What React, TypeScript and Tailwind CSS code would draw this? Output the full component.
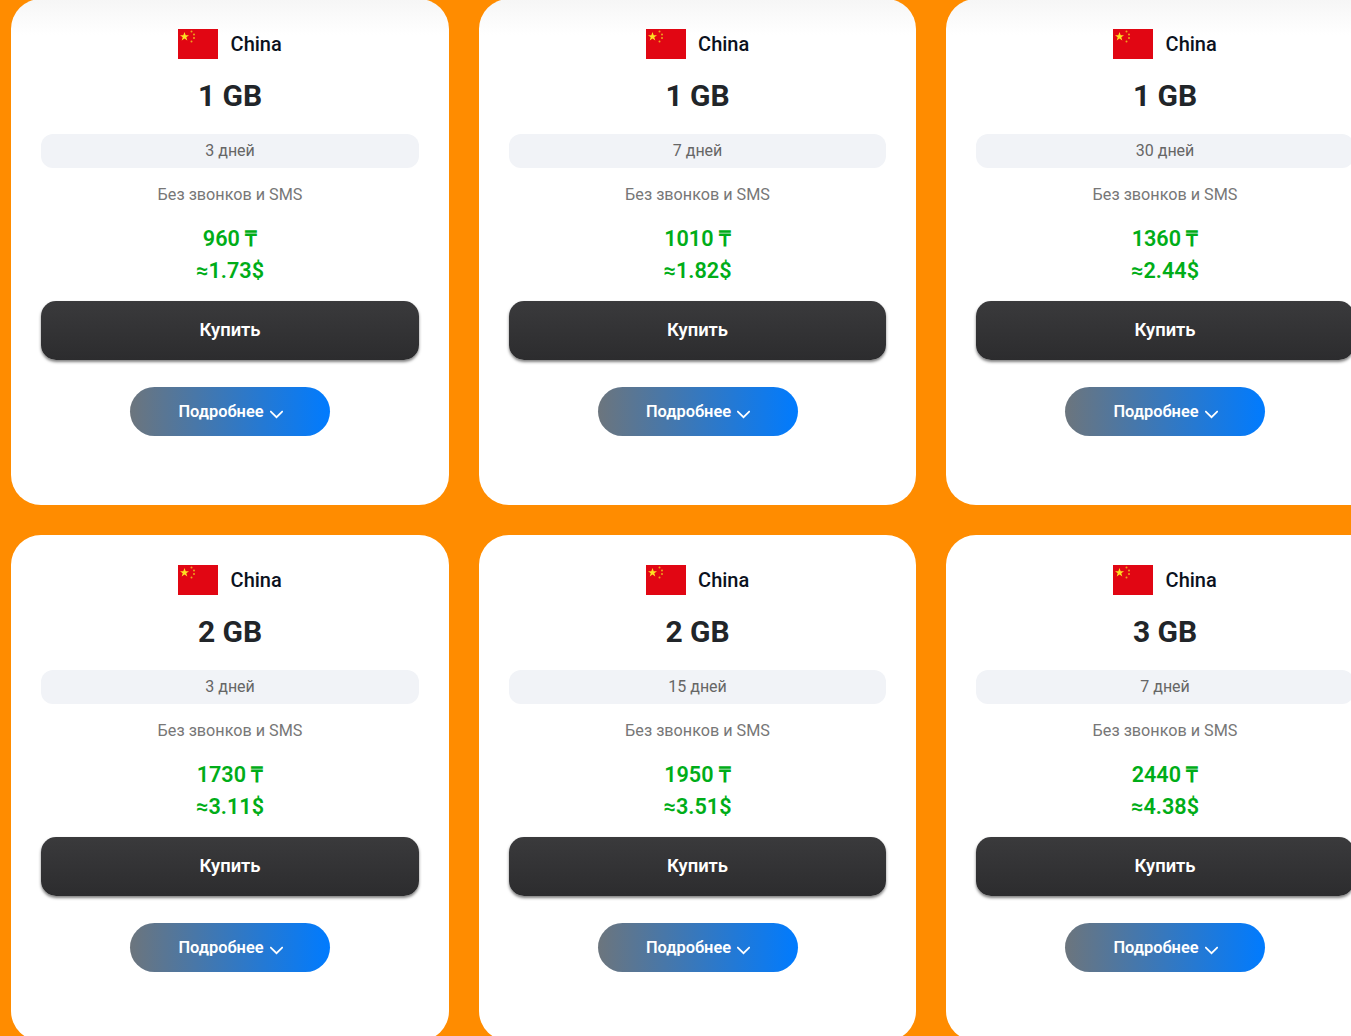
const plans = [
  { gb: "1 GB", days: "3 дней", price: "960", usd: "1.73" },
  { gb: "1 GB", days: "7 дней", price: "1010", usd: "1.82" },
  { gb: "1 GB", days: "30 дней", price: "1360", usd: "2.44" },
  { gb: "2 GB", days: "3 дней", price: "1730", usd: "3.11" },
  { gb: "2 GB", days: "15 дней", price: "1950", usd: "3.51" },
  { gb: "3 GB", days: "7 дней", price: "2440", usd: "4.38" },
];

function ChinaFlag() {
  return (
    <svg width="40" height="30" viewBox="0 0 40 30" className="shrink-0">
      <rect width="40" height="30" fill="#e10613" />
      <polygon
        points="6.5,3 7.7,6.2 11,6.2 8.3,8.3 9.3,11.5 6.5,9.6 3.7,11.5 4.7,8.3 2,6.2 5.3,6.2"
        fill="#fde023"
      />
      <circle cx="13.5" cy="2.5" r="1" fill="#eda51e" />
      <circle cx="16" cy="5.5" r="1" fill="#eda51e" />
      <circle cx="16" cy="9" r="1" fill="#eda51e" />
      <circle cx="13.5" cy="12.5" r="1" fill="#eda51e" />
    </svg>
  );
}

function PlanCard({
  gb,
  days,
  price,
  usd,
  faded,
}: {
  gb: string;
  days: string;
  price: string;
  usd: string;
  faded: boolean;
}) {
  return (
    <div
      className={
        faded
          ? "h-[506px] rounded-[30px] bg-[linear-gradient(180deg,#f6f6f6_0px,#ffffff_36px)] p-[30px] text-center"
          : "h-[506px] rounded-[30px] bg-white p-[30px] text-center"
      }
    >
      <div className="flex h-[30px] items-center justify-center gap-[12.3px]">
        <ChinaFlag />
        <span className="text-[20px] font-medium text-[#0b1220]">China</span>
      </div>
      <h2 className="mt-[16px] h-[44px] text-[30px] leading-[42px] font-bold text-[#212529]">{gb}</h2>
      <div className="mt-[15px] h-[34px] rounded-[12px] bg-[#f1f3f7] text-[16px] leading-[34px] text-[#666666]">
        {days}
      </div>
      <p className="mt-[17px] h-[20px] text-[16.2px] leading-[20px] text-[#777777]">Без звонков и SMS</p>
      <div className="mt-[18px] text-[21.6px] leading-[31.5px] font-semibold text-[#00ad18]">
        <div>{price} ₸</div>
        <div>≈{usd}$</div>
      </div>
      <button className="mt-[15px] h-[59px] w-full rounded-[15px] bg-[linear-gradient(180deg,#3a3a3c,#2c2c2e)] pb-[2px] text-[18.4px] font-semibold text-white shadow-[0_2px_3px_rgba(0,0,0,0.5)]">
        Купить
      </button>
      <button className="mx-auto mt-[27px] flex h-[49.3px] w-[200px] items-center justify-center gap-[6px] rounded-full bg-[linear-gradient(90deg,#6c757d,#007bff)] pt-[2px] pl-[1px] text-[16.4px] font-semibold text-white">
        Подробнее
        <svg width="13" height="16" viewBox="1 0 13 16" fill="none" stroke="currentColor" strokeWidth="1.7" className="mt-[3px]">
          <path d="M1.3 5 7.5 11.2 13.7 5" />
        </svg>
      </button>
    </div>
  );
}

export default function App() {
  return (
    <div className="h-screen overflow-hidden bg-[#ff8c00] font-['Roboto',sans-serif]">
      <div className="-mt-px grid w-[1412.8px] grid-cols-[repeat(3,437.5px)] gap-[30px] pl-[11.3px]">
        {plans.map((plan, i) => (
          <PlanCard key={i} {...plan} faded={i < 3} />
        ))}
      </div>
    </div>
  );
}
